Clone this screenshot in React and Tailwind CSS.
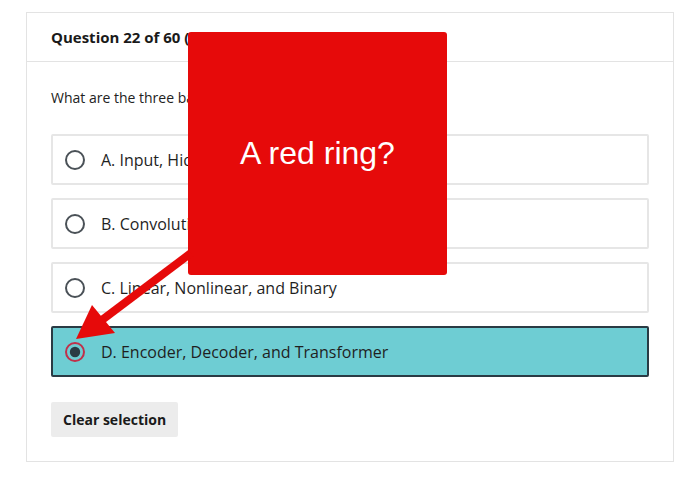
import React from 'react';

const options = [
  { id: 'A', label: 'A. Input, Hidden, and Output' },
  { id: 'B', label: 'B. Convolutional, Pooling, and Dense' },
  { id: 'C', label: 'C. Linear, Nonlinear, and Binary' },
  { id: 'D', label: 'D. Encoder, Decoder, and Transformer' },
];

const Radio = ({ checked }) => (
  <svg width="22" height="22" viewBox="0 0 22 22" className="shrink-0">
    {checked ? (
      <>
        <circle cx="11" cy="11" r="9" fill="none" stroke="#c0304a" strokeWidth="2" />
        <circle cx="11" cy="11" r="5.2" fill="#2a3b44" />
      </>
    ) : (
      <circle cx="11" cy="11" r="9" fill="none" stroke="#4a5157" strokeWidth="2" />
    )}
  </svg>
);

const App = () => {
  const selected = 'D';
  return (
    <div className="relative w-[691px] h-[497px] bg-white overflow-hidden" style={{ fontFamily: '"Open Sans", "Noto Sans", sans-serif' }}>
      <div className="ml-[26px] mt-[12px] w-[648px] border border-[#e3e3e3] bg-white">
        <div className="h-[49px] px-[24px] flex items-center border-b border-[#e3e3e3]">
          <h2 className="text-[15px] font-bold text-[#1a1a1a]">Question 22 of 60 (required)</h2>
        </div>
        <div className="px-[24px] pt-[26px] pb-[24px]">
          <p className="text-[14px] leading-[20px] text-[#222]">What are the three basic types of layers in a neural network?</p>
          <div className="mt-[26px] flex flex-col gap-[13px]">
            {options.map((o) => {
              const on = o.id === selected;
              return (
                <div
                  key={o.id}
                  className={
                    on
                      ? 'h-[51px] flex items-center gap-[15px] pl-[11px] border-2 border-[#2a3b44] bg-[#6ecdd3] rounded-[2px]'
                      : 'h-[51px] flex items-center gap-[15px] pl-[11px] border-2 border-[#e6e6e6] bg-white rounded-[2px]'
                  }
                >
                  <Radio checked={on} />
                  <span className="text-[16px] text-[#1f1f1f]">{o.label}</span>
                </div>
              );
            })}
          </div>
          <button className="mt-[25px] h-[35px] px-[12px] bg-[#ececec] rounded-[2px] text-[14px] font-bold text-[#1a1a1a]">
            Clear selection
          </button>
        </div>
      </div>

      {/* annotation overlay */}
      <div className="absolute left-[188px] top-[32px] w-[259px] h-[243px] bg-[#e60a0a] rounded-[3px] flex items-center justify-center">
        <span className="text-white text-[32px] leading-none pb-[2px]" style={{ fontFamily: '"Liberation Sans", Arial, sans-serif' }}>A red ring?</span>
      </div>
      <svg className="absolute left-0 top-0 pointer-events-none" width="691" height="497">
        <line x1="191" y1="253" x2="98" y2="323" stroke="#e60a0a" strokeWidth="8" />
        <polygon points="76,339 92,305 115,333" fill="#e60a0a" />
      </svg>
    </div>
  );
};

export default App;
